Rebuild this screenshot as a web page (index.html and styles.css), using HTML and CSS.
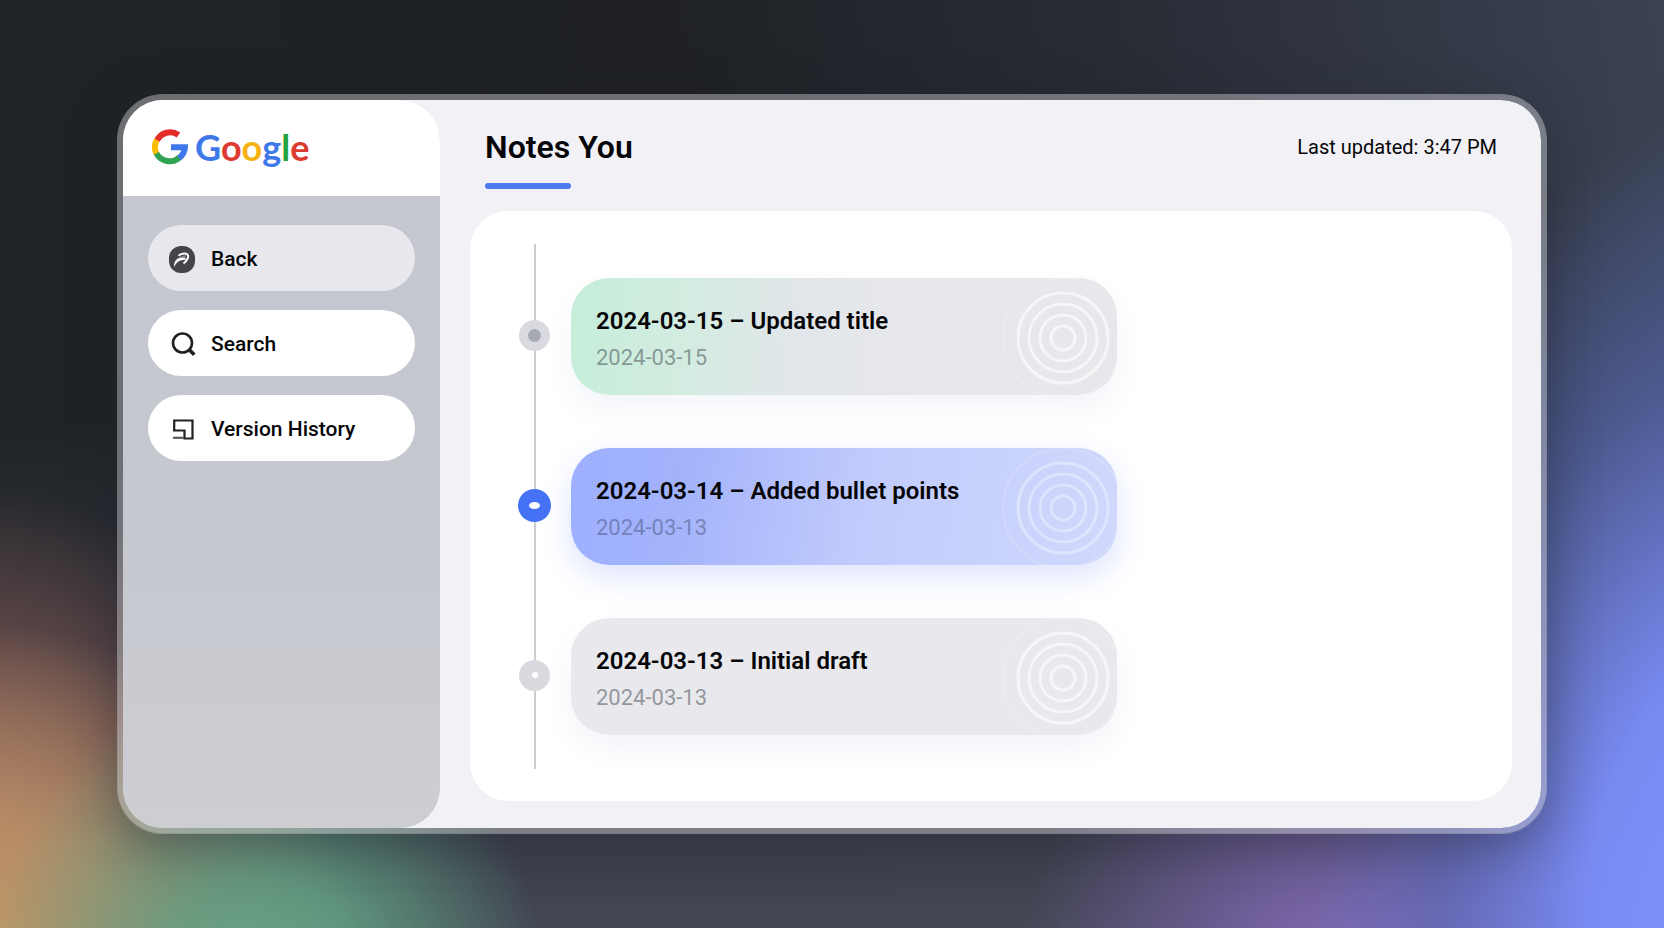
FILE: index.html
```html
<!DOCTYPE html>
<html lang="en">
<head>
<meta charset="utf-8">
<meta name="viewport" content="width=device-width, initial-scale=1">
<title>Notes You – Version History</title>
<link rel="stylesheet" href="styles.css">
</head>
<body>
<div class="window">
  <aside class="sidebar">
    <div class="brand">
      <svg class="brand-mark" viewBox="0 0 36 36" aria-hidden="true" fill="none" stroke-width="6">
        <path stroke="#e32d2a" d="M5 11.5A14.5 14.5 0 0 1 26.5 6"/>
        <path stroke="#fbbc05" d="M4.6 25A15 15 0 0 1 4.8 11"/>
        <path stroke="#2fa352" d="M4.4 24.4A15 15 0 0 0 27.500 28.500"/>
        <path stroke="#3f78e8" d="M19 18.200H33A15 15 0 0 1 27 29"/>
      </svg>
      <span class="wordmark"><span class="c-blue">G</span><span class="c-red">o</span><span class="c-yellow">o</span><span class="c-blue">g</span><span class="c-green">l</span><span class="c-red">e</span></span>
    </div>
    <nav class="nav" aria-label="Main">
      <button class="nav-item nav-item-muted" type="button">
        <svg class="nav-icon" viewBox="0 0 26 26" aria-hidden="true">
          <rect width="26" height="27" rx="12" fill="#434548"/>
          <path d="M5 21C5 15.500 7.500 12.300 11.500 11.500L16 11.500 17 13.500 12.500 14.200C9 15 7 17 5 21Z" fill="#fff"/>
          <path d="M9.500 9.800C12.500 6.800 18.200 6.600 19 9.500S18 14.500 14.500 17.500" fill="none" stroke="#fff" stroke-width="2"/>
          <path d="M11.500 10.500 17 9 16.500 11.800Z" fill="#85888b"/>
        </svg>
        <span>Back</span>
      </button>
      <button class="nav-item" type="button">
        <svg class="nav-icon" viewBox="0 0 26 26" aria-hidden="true" fill="none" stroke="#1f2124">
          <circle cx="13.500" cy="12" r="9.500" stroke-width="2.600"/>
          <path d="M20 18.500 25.300 23.800" stroke-width="3.600"/>
        </svg>
        <span>Search</span>
      </button>
      <button class="nav-item" type="button">
        <svg class="nav-icon" viewBox="0 0 26 26" aria-hidden="true" fill="none" stroke="#1f2124" stroke-width="2.200">
          <path d="M5.200 15V4.500H23.500V22.500H16.500M4 14.500H15.500V23.500"/>
          <path d="M4 21.800H15" stroke="#55585c"/>
        </svg>
        <span>Version History</span>
      </button>
    </nav>
  </aside>
  <main class="main">
    <header class="header">
      <h1 class="title">Notes You</h1>
      <p class="updated">Last updated: 3:47 PM</p>
    </header>
    <section class="panel" aria-label="Version history">
      <ol class="timeline">
        <li class="entry">
          <span class="dot dot-ring"></span>
          <article class="card card-green">
            <div><h2 class="card-title">2024-03-15 – Updated title</h2><p class="card-date">2024-03-15</p></div>
            <svg class="rings" viewBox="0 0 124 118" aria-hidden="true"><circle class="ring-faint" cx="70" cy="60" r="60"/><circle cx="70" cy="60" r="45"/><circle cx="70" cy="60" r="34"/><circle cx="70" cy="60" r="23"/><circle cx="70" cy="60" r="12"/></svg>
          </article>
        </li>
        <li class="entry">
          <span class="dot dot-active"></span>
          <article class="card card-blue">
            <div><h2 class="card-title">2024-03-14 – Added bullet points</h2><p class="card-date">2024-03-13</p></div>
            <svg class="rings" viewBox="0 0 124 118" aria-hidden="true"><circle class="ring-faint" cx="70" cy="60" r="60"/><circle cx="70" cy="60" r="45"/><circle cx="70" cy="60" r="34"/><circle cx="70" cy="60" r="23"/><circle cx="70" cy="60" r="12"/></svg>
          </article>
        </li>
        <li class="entry">
          <span class="dot"></span>
          <article class="card">
            <div><h2 class="card-title">2024-03-13 – Initial draft</h2><p class="card-date">2024-03-13</p></div>
            <svg class="rings" viewBox="0 0 124 118" aria-hidden="true"><circle class="ring-faint" cx="70" cy="60" r="60"/><circle cx="70" cy="60" r="45"/><circle cx="70" cy="60" r="34"/><circle cx="70" cy="60" r="23"/><circle cx="70" cy="60" r="12"/></svg>
          </article>
        </li>
      </ol>
    </section>
  </main>
</div>
</body>
</html>
```
FILE: styles.css
```css
* { box-sizing: border-box; }

body {
  margin: 0;
  min-height: 100vh;
  display: flex;
  padding: 94px 117px;
  font-family: Roboto, "Noto Sans", sans-serif;
  color: #060608;
  background:
    radial-gradient(ellipse 25% 92% at 104% 104%, #8294ff 0%, rgba(124, 142, 252, 0.940) 35%, rgba(95, 115, 205, 0.500) 70%, rgba(75, 90, 150, 0) 100%),
    radial-gradient(ellipse 20% 40% at 81% 108%, rgba(140, 115, 200, 0.950) 0%, rgba(125, 100, 175, 0.600) 50%, rgba(110, 85, 150, 0) 100%),
    radial-gradient(ellipse 17% 38% at 16% 110%, #66a888 0%, rgba(98, 160, 132, 0.850) 40%, rgba(70, 120, 115, 0) 100%),
    radial-gradient(ellipse 24% 40% at -2% 107%, #c09c68 0%, rgba(188, 148, 105, 0.850) 45%, rgba(150, 105, 90, 0) 100%),
    radial-gradient(ellipse 24% 46% at -3% 98%, rgba(180, 112, 92, 0.950) 0%, rgba(145, 92, 85, 0.650) 50%, rgba(90, 60, 75, 0) 100%),
    linear-gradient(180deg, rgba(66, 70, 84, 0) 45%, #434754 100%),
    linear-gradient(80deg, #202326 0%, #1f2125 45%, #282c35 70%, #3b4252 100%);
}

h1, h2, p, ol { margin: 0; }

.window {
  flex: 1;
  display: grid;
  grid-template-columns: 317px minmax(0, 1fr);
  border: 6px solid rgba(205, 205, 208, 0.450);
  border-radius: 46px;
  background: #f1f1f6;
  background-clip: padding-box;
  box-shadow: 0 14px 50px rgba(30, 32, 44, 0.400);
}

.sidebar {
  display: flex;
  flex-direction: column;
  overflow: hidden;
  border-radius: 40px;
  background: linear-gradient(180deg, #c4c7cf 0%, #c6c8d0 60%, #cdced2 100%);
}

.brand {
  display: flex;
  align-items: center;
  gap: 7px;
  height: 96px;
  padding: 0 29px 2px;
  background: #fff;
}

.brand-mark { width: 36px; height: 36px; }

.wordmark {
  font-family: Lato, sans-serif;
  font-size: 36px;
  font-weight: 700;
  line-height: 40px;
}

.c-blue { color: #3f78e8; }
.c-red { color: #dc3b32; }
.c-yellow { color: #f5b211; }
.c-green { color: #23a23e; }

.nav {
  display: flex;
  flex-direction: column;
  gap: 19px;
  padding: 29px 25px;
}

.nav-item {
  display: flex;
  align-items: center;
  gap: 16px;
  height: 66px;
  padding: 2px 21px 0;
  border: 0;
  border-radius: 33px;
  background: #fff;
  color: inherit;
  font: 500 21px/28px Roboto, "Noto Sans", sans-serif;
  cursor: pointer;
}

.nav-item-muted { background: #e8e8ec; }

.nav-icon { width: 26px; height: 26px; overflow: visible; }

.main {
  display: flex;
  flex-direction: column;
  padding: 0 29px 27px 30px;
}

.header {
  display: flex;
  justify-content: space-between;
  align-items: flex-start;
  height: 111px;
  padding: 26px 15px 0;
}

.title {
  font-size: 32px;
  font-weight: 600;
  line-height: 42px;
}

.title::after {
  content: "";
  display: block;
  width: 86px;
  height: 6px;
  margin-top: 15px;
  border-radius: 3px;
  background: #4b7bf0;
}

.updated { font-size: 20px; line-height: 42px; }

.panel {
  flex: 1;
  display: flex;
  padding: 33px 48px 32px;
  border-radius: 38px;
  background: #fff;
}

.timeline {
  position: relative;
  flex: 1;
  display: flex;
  flex-direction: column;
  justify-content: space-between;
  gap: 20px;
  padding: 34px 0;
  list-style: none;
}

.timeline::before {
  content: "";
  position: absolute;
  top: 0;
  bottom: 0;
  left: 16px;
  width: 2px;
  background: #cdcdd0;
}

.entry {
  display: grid;
  grid-template-columns: 33px minmax(0, 546px);
  gap: 20px;
  align-items: center;
}

.dot {
  position: relative;
  display: grid;
  place-items: center;
  justify-self: center;
  width: 31px;
  height: 31px;
  margin-bottom: 3px;
  border-radius: 50%;
  background: #d9d9df;
}

.dot::after {
  content: "";
  width: 6px;
  height: 6px;
  border-radius: 50%;
  background: #fff;
}

.dot-ring::after { width: 13px; height: 13px; background: #a5aab5; }

.dot-active { width: 33px; height: 33px; background: #4673f5; }
.dot-active::after { width: 11px; height: 7px; }

.card {
  position: relative;
  overflow: hidden;
  height: 117px;
  padding: 26px 25px;
  border-radius: 38px;
  background: #e9e9ed;
  box-shadow: 0 14px 28px rgba(90, 110, 170, 0.070);
}

.card-green { background: linear-gradient(95deg, #c5edda 0%, #d2ece0 20%, #e2e6ea 42%, #e8e8ec 65%); }

.card-blue {
  background: linear-gradient(100deg, #9dafff 0%, #a3b3fb 20%, #c2ccfc 55%, #d0d8fc 100%);
  box-shadow: 0 12px 30px rgba(90, 120, 245, 0.200);
}

.card-title { font-size: 24px; font-weight: 600; line-height: 34px; }

.card-date { margin-top: 4px; color: rgba(60, 65, 75, 0.500); font-size: 22px; line-height: 32px; }
.card-blue .card-date { color: rgba(70, 80, 120, 0.500); }

.rings {
  position: absolute;
  top: 0;
  right: 0;
  width: 124px;
  height: 118px;
  fill: none;
  stroke: rgba(255, 255, 255, 0.600);
  stroke-width: 3px;
}

.card-blue .rings { stroke: rgba(255, 255, 255, 0.360); }

.rings .ring-faint { stroke: rgba(255, 255, 255, 0.140); stroke-width: 2px; }
```
